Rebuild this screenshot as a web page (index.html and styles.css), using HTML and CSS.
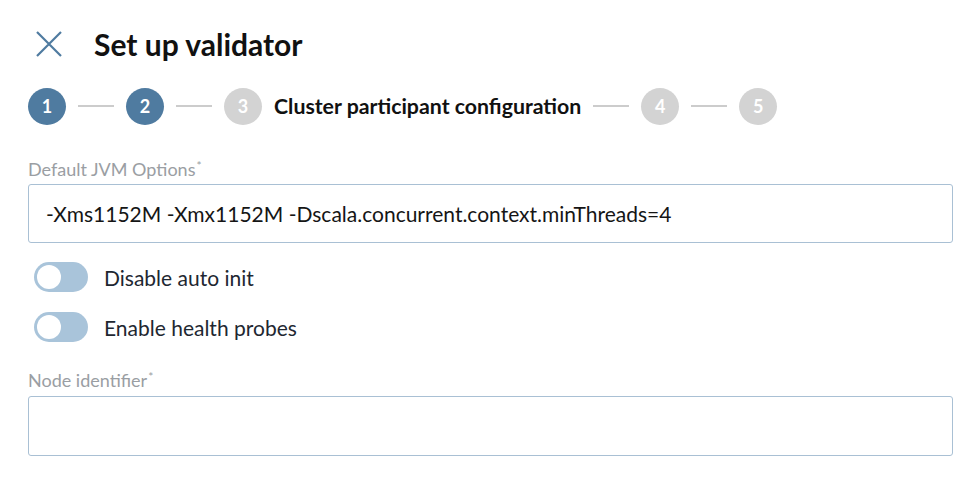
FILE: index.html
```html
<!DOCTYPE html>
<html lang="en">
<head>
<meta charset="utf-8">
<title>Set up validator</title>
<link rel="stylesheet" href="styles.css">
</head>
<body>
<div class="page">
  <div class="header">
    <span class="close">
      <svg width="26" height="26" viewBox="0 0 26 26"><path d="M1 1 L25 25 M25 1 L1 25" stroke="#4f7ba0" stroke-width="2.2" fill="none"/></svg>
    </span>
    <h1 class="title">Set up validator</h1>
  </div>

  <div class="stepper">
    <span class="step done">1</span>
    <span class="connector"></span>
    <span class="step done">2</span>
    <span class="connector"></span>
    <span class="step todo">3</span>
    <span class="step-label">Cluster participant configuration</span>
    <span class="connector"></span>
    <span class="step todo">4</span>
    <span class="connector"></span>
    <span class="step todo">5</span>
  </div>

  <label class="field-label first">Default JVM Options<sup>*</sup></label>
  <div class="input">-Xms1152M -Xmx1152M -Dscala.concurrent.context.minThreads=4</div>

  <div class="toggle-row first">
    <span class="toggle"><span class="knob"></span></span>
    <span class="toggle-label">Disable auto init</span>
  </div>
  <div class="toggle-row">
    <span class="toggle"><span class="knob"></span></span>
    <span class="toggle-label">Enable health probes</span>
  </div>

  <label class="field-label second">Node identifier<sup>*</sup></label>
  <div class="input tall"></div>
</div>
</body>
</html>
```

FILE: styles.css
```css
html, body {
  margin: 0;
  padding: 0;
  background: #ffffff;
}
body {
  font-family: Lato, "Open Sans", sans-serif;
  color: #111111;
}
.page {
  padding: 0 25px 0 28px;
}
.header {
  display: flex;
  align-items: center;
  height: 44px;
  margin-top: 22px;
}
.close {
  display: flex;
  width: 26px;
  height: 26px;
  margin-left: 8px;
}
.title {
  margin: 0 0 0 32px;
  font-size: 30px;
  font-weight: 700;
  line-height: 44px;
  color: #111111;
}
.stepper {
  display: flex;
  align-items: center;
  height: 38px;
  margin-top: 21px;
}
.step {
  width: 38px;
  height: 37px;
  border-radius: 50%;
  display: flex;
  align-items: center;
  justify-content: center;
  color: #ffffff;
  font-size: 18px;
  font-weight: 700;
  flex: none;
}
.step.done {
  background: #4f7ba0;
}
.step.todo {
  background: #d3d3d3;
}
.connector {
  width: 36px;
  height: 2px;
  background: #cccccc;
  margin: 0 12px;
  flex: none;
}
.step-label {
  margin-left: 12px;
  font-size: 21.3px;
  font-weight: 700;
  color: #111111;
}
.field-label {
  display: block;
  font-size: 18px;
  line-height: 20px;
  color: #9a9ea3;
  font-weight: 400;
}
.field-label sup {
  font-size: 12px;
  vertical-align: top;
  line-height: 12px;
  position: relative;
  top: 1px;
  margin-left: 1px;
}
.field-label.first {
  margin-top: 34px;
  margin-bottom: 5px;
}
.field-label.second {
  margin-top: 28px;
  margin-bottom: 6px;
}
.input {
  box-sizing: border-box;
  height: 59px;
  border: 1px solid #a9c0d4;
  border-radius: 3px;
  padding-left: 17px;
  display: flex;
  align-items: center;
  font-size: 21px;
  color: #151515;
}
.input.tall {
  height: 60px;
}
.toggle-row {
  display: flex;
  align-items: center;
  height: 30px;
  margin-top: 20px;
}
.toggle-row.first {
  margin-top: 19px;
}
.toggle {
  box-sizing: border-box;
  width: 54px;
  height: 30px;
  border-radius: 15px;
  background: #a9c4da;
  margin-left: 6px;
  padding: 3px;
  display: flex;
  flex: none;
}
.knob {
  width: 24px;
  height: 24px;
  border-radius: 50%;
  background: #ffffff;
}
.toggle-label {
  margin-left: 16px;
  font-size: 21px;
  color: #1e2731;
}
```
